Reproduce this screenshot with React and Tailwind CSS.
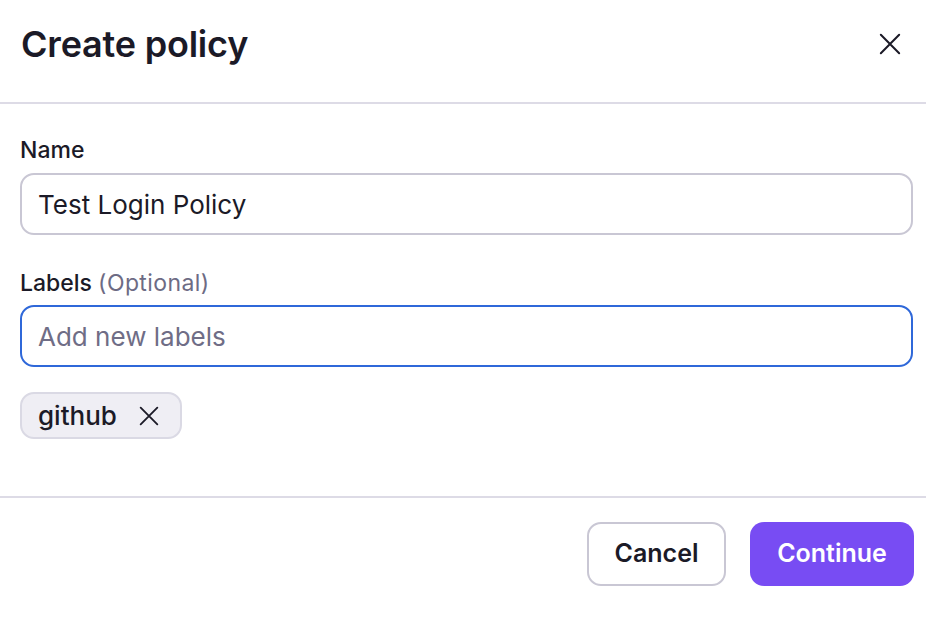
import { useState } from "react";

function CloseIcon({ className }) {
  return (
    <svg viewBox="0 0 24 24" fill="none" stroke="currentColor" strokeWidth="2.2" strokeLinecap="round" className={className}>
      <path d="M2 2L22 22M22 2L2 22" />
    </svg>
  );
}

export default function App() {
  const [name, setName] = useState("Test Login Policy");
  const [label, setLabel] = useState("");
  const [labels, setLabels] = useState(["github"]);

  return (
    <div className="flex h-[618px] w-[926px] flex-col bg-white text-[#1b1a27]" style={{ fontFamily: "Inter, 'Noto Sans', sans-serif" }}>
      <div className="flex h-[102px] items-center justify-between pl-[21px] pr-[25px] pb-[14px]">
        <h1 className="text-[36px] font-semibold leading-none tracking-[-0.2px]">Create policy</h1>
        <button type="button" className="text-[#1b1a27]">
          <CloseIcon className="h-[22px] w-[22px]" />
        </button>
      </div>
      <div className="h-[2px] bg-[#dddbe6]" />

      <div className="flex flex-1 flex-col pl-[20px] pr-[13px] pt-[32px]">
        <label className="text-[23px] font-medium leading-[28px]">Name</label>
        <input
          className="mt-[9px] h-[62px] w-full rounded-[14px] border-2 border-[#c9c7d4] px-[16px] text-[26px] text-[#1b1a27] outline-none"
          value={name}
          onChange={(e) => setName(e.target.value)}
        />

        <label className="mt-[34px] text-[23px] font-medium leading-[28px]">
          Labels <span className="font-normal tracking-[0.4px] text-[#6d6b84]">(Optional)</span>
        </label>
        <input
          className="mt-[8px] h-[62px] w-full rounded-[14px] border-2 border-[#2f68d9] px-[16px] text-[26px] text-[#1b1a27] outline-none placeholder:text-[#6f6d86]"
          placeholder="Add new labels"
          value={label}
          onChange={(e) => setLabel(e.target.value)}
        />

        <div className="mt-[25px] flex gap-2">
          {labels.map((l) => (
            <span key={l} className="flex h-[47px] items-center gap-[22px] rounded-[14px] border-2 border-[#dad9e4] bg-[#efeef4] pl-[16px] pr-[21px] text-[26px] font-medium">
              {l}
              <button type="button" onClick={() => setLabels(labels.filter((x) => x !== l))}>
                <CloseIcon className="h-[20px] w-[20px]" />
              </button>
            </span>
          ))}
        </div>
      </div>

      <div className="h-[2px] bg-[#dddbe6]" />
      <div className="flex justify-end gap-[24px] px-[12px] pb-[32px] pt-[24px]">
        <button type="button" className="h-[64px] w-[139px] rounded-[14px] border-2 border-[#c9c7d4] bg-white text-[25px] font-semibold">
          Cancel
        </button>
        <button type="button" className="h-[64px] w-[164px] rounded-[14px] bg-[#784cf3] text-[25px] font-semibold text-white">
          Continue
        </button>
      </div>
    </div>
  );
}
